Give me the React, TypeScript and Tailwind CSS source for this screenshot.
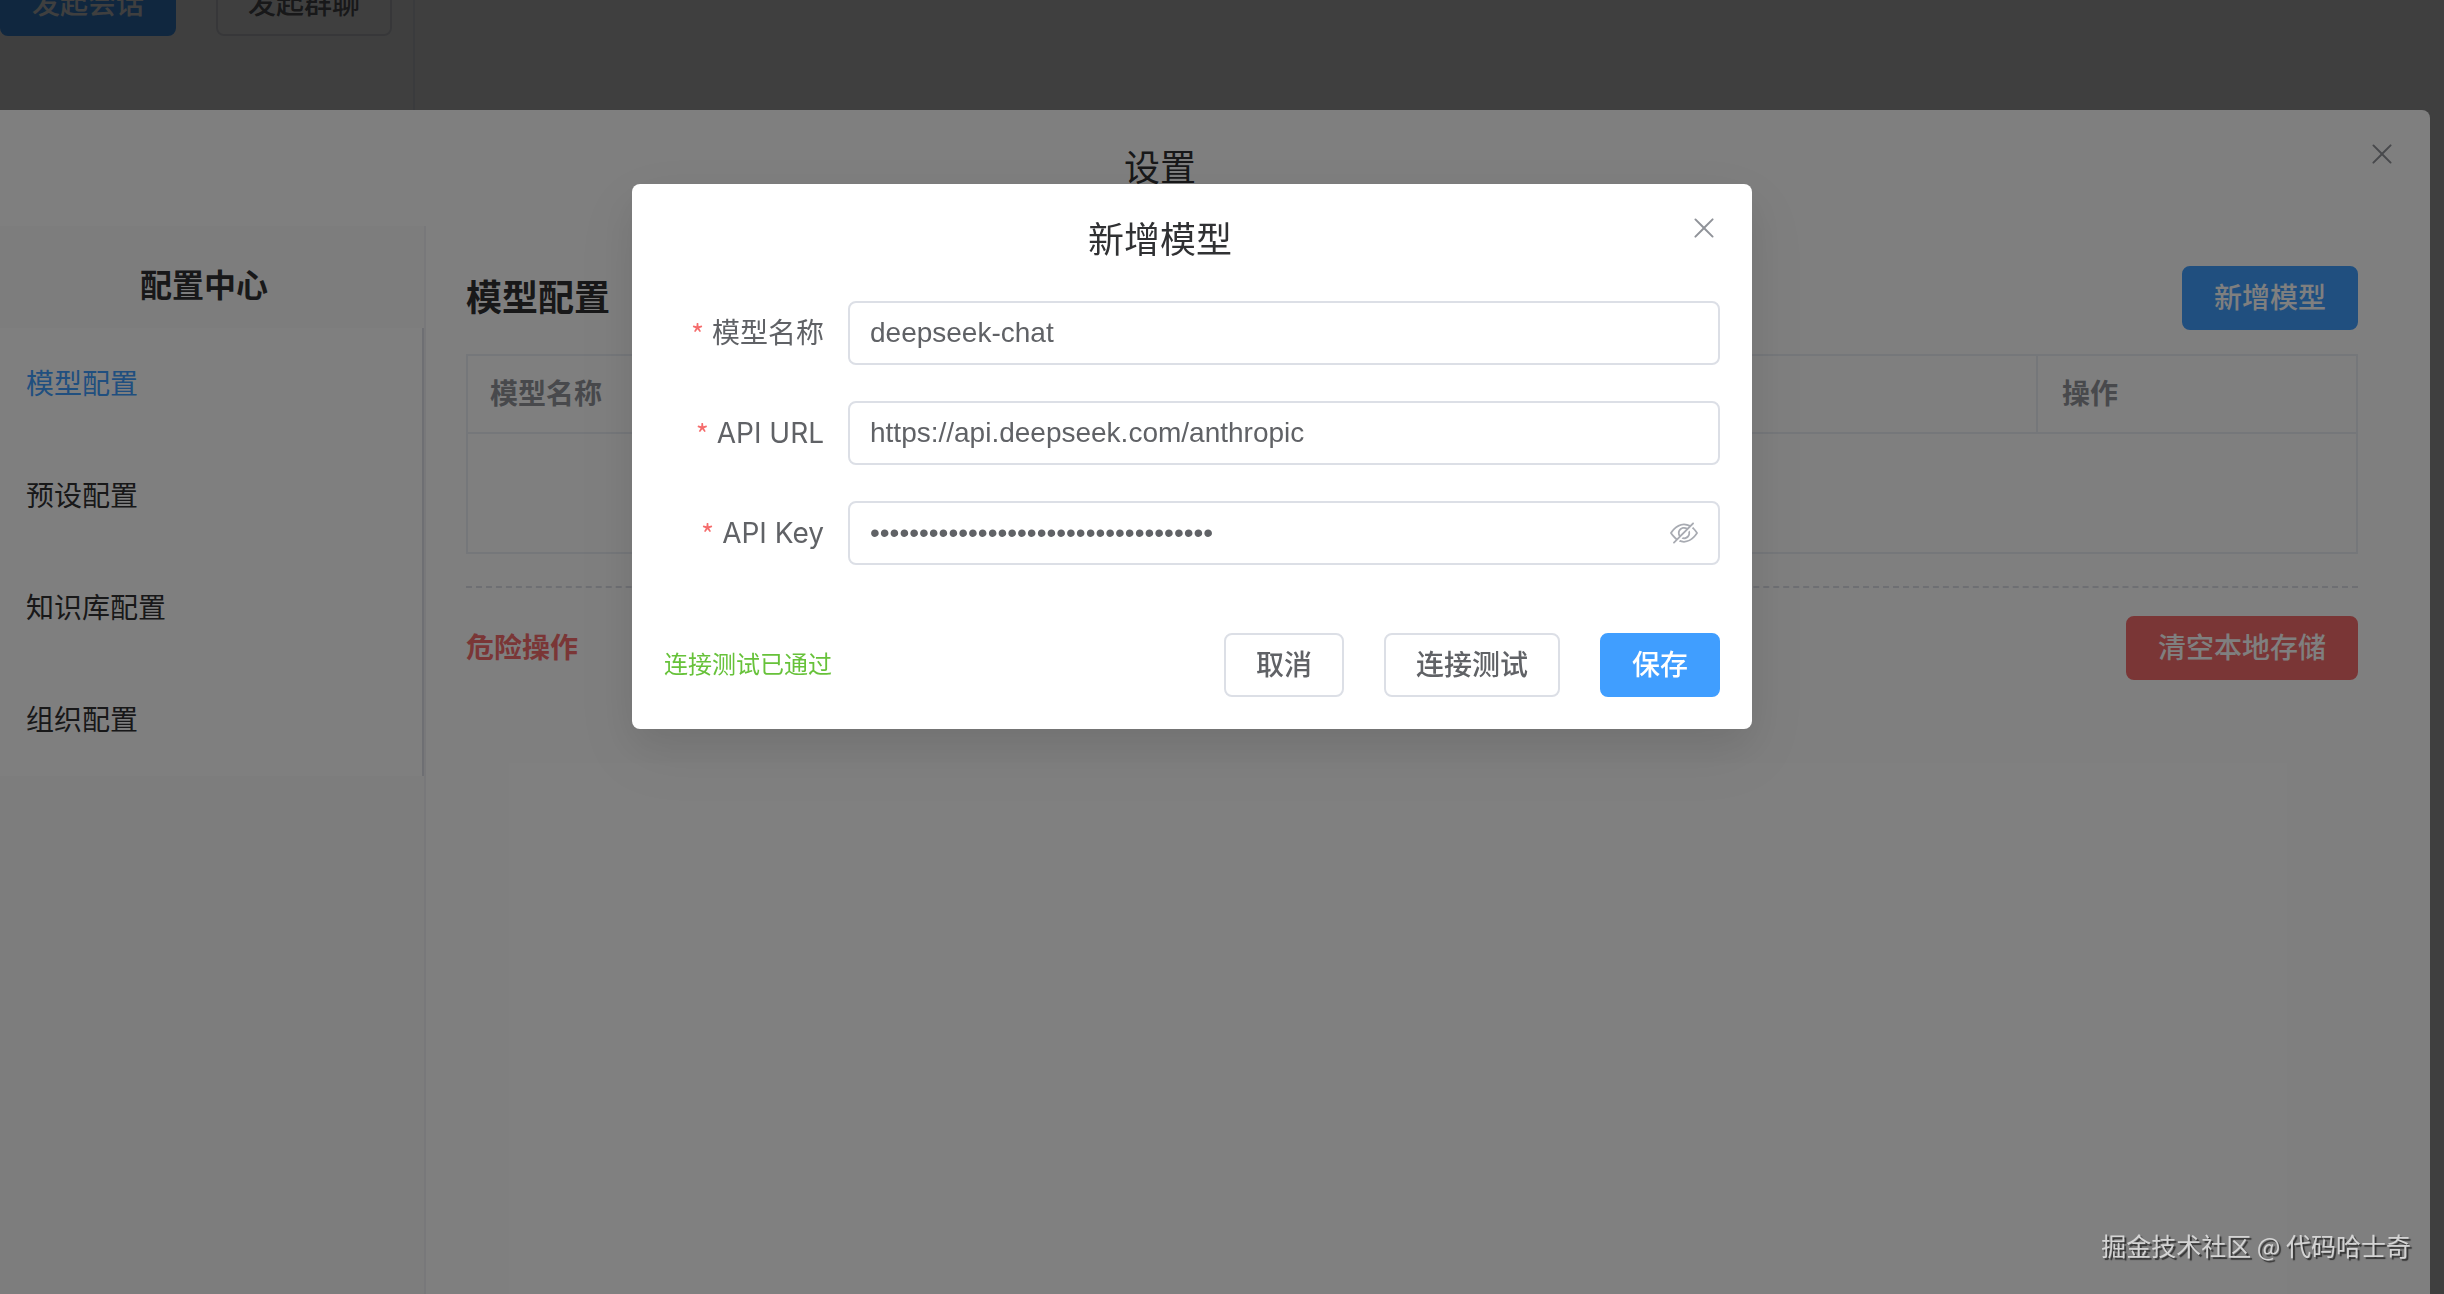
import React from "react";

const CLOSE_PATH =
  "M764.288 214.592 512 466.88 259.712 214.592a31.936 31.936 0 0 0-45.12 45.12L466.752 512 214.528 764.224a31.936 31.936 0 1 0 45.12 45.184L512 557.184l252.288 252.288a31.936 31.936 0 0 0 45.12-45.12L557.12 512.064l252.288-252.352a31.936 31.936 0 1 0-45.12-45.184z";

function CloseButton() {
  return (
    <button
      type="button"
      aria-label="关闭"
      className="absolute right-0 top-0 flex h-22 w-24 items-center justify-center text-[#909399]"
    >
      <svg viewBox="0 0 1024 1024" className="size-8" fill="currentColor" aria-hidden="true">
        <path d={CLOSE_PATH} />
      </svg>
    </button>
  );
}

function HideIcon() {
  return (
    <svg viewBox="0 0 1024 1024" className="size-7" fill="currentColor" aria-hidden="true">
      <path d="M876.8 156.8c0-9.6-3.2-16-9.6-22.4-6.4-6.4-12.8-9.6-22.4-9.6-9.6 0-16 3.2-22.4 9.6L736 220.8c-64-32-137.6-51.2-224-60.8-160 16-288 73.6-377.6 176C44.8 438.4 0 496 0 512s48 73.6 134.4 176c22.4 25.6 44.8 48 73.6 67.2l-86.4 89.6c-6.4 6.4-9.6 12.8-9.6 22.4 0 9.6 3.2 16 9.6 22.4 6.4 6.4 12.8 9.6 22.4 9.6 9.6 0 16-3.2 22.4-9.6l704-710.4c3.2-6.4 6.4-12.8 6.4-22.4Zm-646.4 528c-76.8-70.4-128-128-153.6-172.8 28.8-48 80-105.6 153.6-172.8C304 272 400 230.4 512 224c64 3.2 124.8 19.2 176 44.8l-54.4 54.4C598.4 300.8 560 288 512 288c-64 0-115.2 22.4-160 64s-64 96-64 160c0 48 12.8 89.6 35.2 124.8L256 707.2c-9.6-6.4-19.2-16-25.6-22.4Zm140.8-96c-12.8-22.4-19.2-48-19.2-76.8 0-44.8 16-83.2 48-112 32-28.8 67.2-48 112-48 28.8 0 54.4 6.4 73.6 19.2L371.2 588.8ZM889.599 336c-12.8-16-28.8-28.8-41.6-41.6l-48 48c73.6 67.2 124.8 124.8 150.4 169.6-28.8 48-80 105.6-153.6 172.8-73.6 67.2-172.8 108.8-284.8 115.2-51.2-3.2-99.2-12.8-140.8-28.8l-48 48c57.6 22.4 118.4 38.4 188.8 44.8 160-16 288-73.6 377.6-176C979.199 585.6 1024 528 1024 512s-48.001-73.6-134.401-176Z" />
      <path d="M511.998 672c-12.8 0-25.6-3.2-38.4-6.4l-51.2 51.2c28.8 12.8 57.6 19.2 89.6 19.2 64 0 115.2-22.4 160-64 41.6-41.6 64-96 64-160 0-32-6.4-64-19.2-89.6l-51.2 51.2c3.2 12.8 6.4 25.6 6.4 38.4 0 44.8-16 83.2-48 112-32 28.8-67.2 48-112 48Z" />
    </svg>
  );
}

const VARIANTS = {
  default: "border-[#dcdfe6] bg-white text-[#606266]",
  primary: "border-[#409eff] bg-[#409eff] text-white",
  danger: "border-[#f56c6c] bg-[#f56c6c] text-white",
};

function Button({ variant = "default", children }: { variant?: keyof typeof VARIANTS; children: React.ReactNode }) {
  return (
    <button
      type="button"
      className={`flex h-16 shrink-0 items-center justify-center rounded-lg border-2 px-[30px] text-[28px] leading-none font-medium ${VARIANTS[variant]}`}
    >
      {children}
    </button>
  );
}

function Field({ id, label, type = "text", value }: { id: string; label: string; type?: string; value: string }) {
  return (
    <div className="flex items-center">
      <label htmlFor={id} className="flex w-46 shrink-0 justify-end gap-2 pr-6 text-[28px] leading-16">
        <span className="font-['Noto_Sans_CJK_SC',sans-serif] text-[#f56c6c]" aria-hidden="true">
          *
        </span>
        {label}
      </label>
      <div className="flex h-16 min-w-0 flex-1 items-center rounded-lg border-2 border-[#dcdfe6] bg-white px-5">
        <input
          id={id}
          type={type}
          defaultValue={value}
          autoComplete="off"
          className="h-full min-w-0 flex-1 bg-transparent font-['Liberation_Sans',Arial,sans-serif] text-[28px] outline-none"
        />
        {type === "password" && (
          <button type="button" aria-label="显示密钥" className="text-[#a8abb2]">
            <HideIcon />
          </button>
        )}
      </div>
    </div>
  );
}

const NAV = ["模型配置", "预设配置", "知识库配置", "组织配置"];

function Sidebar() {
  return (
    <aside className="flex w-[426px] shrink-0 flex-col border-r-2 border-[#f0f1f5] bg-[#fafafa]">
      <h2 className="pt-9 pr-4 pb-[18px] text-center text-[32px] leading-12 font-bold">配置中心</h2>
      <nav className="border-r-2 border-[#dcdfe6] bg-white">
        {NAV.map((item, i) => (
          <a
            key={item}
            href="#"
            aria-current={i === 0 ? "page" : undefined}
            className={`block px-[26px] text-[28px] leading-28 ${i === 0 ? "text-[#409eff]" : ""}`}
          >
            {item}
          </a>
        ))}
      </nav>
    </aside>
  );
}

function SettingsContent() {
  return (
    <main className="min-w-0 flex-1 pt-10 pr-18 pl-10">
      <div className="mb-6 flex items-center justify-between">
        <h3 className="text-[36px] leading-16 font-bold">模型配置</h3>
        <Button variant="primary">新增模型</Button>
      </div>
      <table className="w-full table-fixed border-collapse border-2 border-[#ebeef5] text-left text-[28px] text-[#909399]">
        <thead>
          <tr className="h-[78px] border-b-2 border-[#ebeef5]">
            <th scope="col" className="px-[22px] font-bold">
              模型名称
            </th>
            <th scope="col" className="w-80 border-l-2 border-[#ebeef5] px-6 font-bold">
              操作
            </th>
          </tr>
        </thead>
        <tbody>
          <tr className="h-[120px]">
            <td colSpan={2} />
          </tr>
        </tbody>
      </table>
      <div className="mt-8 flex items-center justify-between border-t-2 border-dashed border-[#dcdfe6] pt-7">
        <h4 className="text-[28px] font-bold text-[#f56c6c]">危险操作</h4>
        <Button variant="danger">清空本地存储</Button>
      </div>
    </main>
  );
}

function ModelDialog() {
  return (
    <form
      role="dialog"
      aria-label="新增模型"
      className="relative w-280 rounded-lg bg-white p-8 text-[#606266] shadow-[0_24px_64px_8px_rgba(0,0,0,0.04),0_16px_40px_rgba(0,0,0,0.08)]"
    >
      <h2 className="mb-9 pr-16 text-center text-[36px] leading-[49px] text-[#303133]">新增模型</h2>
      <CloseButton />
      <div className="flex flex-col gap-9">
        <Field id="model-name" label="模型名称" value="deepseek-chat" />
        <Field id="api-url" label="API URL" value="https://api.deepseek.com/anthropic" />
        <Field id="api-key" label="API Key" type="password" value="sk-00000000000000000000000000000000" />
      </div>
      <div className="mt-17 flex items-center gap-10">
        <output className="mr-auto text-2xl text-[#67c23a]">连接测试已通过</output>
        <Button>取消</Button>
        <Button>连接测试</Button>
        <Button variant="primary">保存</Button>
      </div>
    </form>
  );
}

export default function App() {
  return (
    <div className="h-screen overflow-hidden bg-white font-['Inter','Noto_Sans_CJK_SC',sans-serif] text-[#303133]">
      <div className="flex h-full">
        <div className="flex w-[415px] shrink-0 items-start border-r-2 border-[#ebeef5]">
          <div className="-mt-7 flex gap-10">
            <Button variant="primary">发起会话</Button>
            <Button>发起群聊</Button>
          </div>
        </div>
      </div>

      <div className="fixed inset-0 flex flex-col bg-black/50 pt-[110px] pr-[14px]">
        <section aria-label="设置" className="relative flex flex-1 flex-col rounded-tr-lg bg-white">
          <h1 className="pt-8 pr-[110px] pb-8 text-center text-[36px] leading-[52px]">设置</h1>
          <CloseButton />
          <div className="flex flex-1">
            <Sidebar />
            <SettingsContent />
          </div>
        </section>
      </div>

      <div className="fixed inset-0 flex items-start justify-center bg-black/50 pt-46 pr-[60px]">
        <ModelDialog />
      </div>

      <p className="fixed right-[33px] bottom-[31px] font-['Noto_Sans_CJK_SC',sans-serif] text-[25px] leading-9 text-[#d4d4d4] [text-shadow:2px_2px_1px_#333]">
        掘金技术社区 @ 代码哈士奇
      </p>
    </div>
  );
}
